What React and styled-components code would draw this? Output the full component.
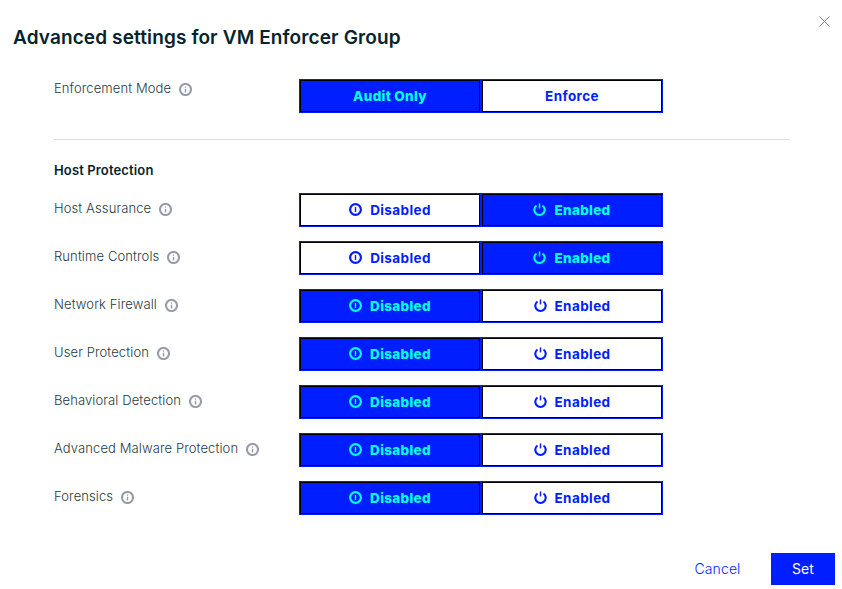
import React from "react";
import styled, { createGlobalStyle } from "styled-components";

const GlobalStyle = createGlobalStyle`
  *, *::before, *::after { box-sizing: border-box; }
  body { margin: 0; background: #fff; font-family: Inter, sans-serif; }
  button { font-family: inherit; margin: 0; cursor: pointer; }
`;

const Dialog = styled.main`
  position: relative;
  width: 842px;
  height: 589px;
  padding-top: 25px;
  background: #fff;
  color: #07242d;
  overflow: hidden;
`;

const Title = styled.h1`
  margin: 0 0 28px 13px;
  font-size: 19px;
  line-height: 26px;
  font-weight: 600;
  letter-spacing: 0.12px;
  white-space: nowrap;
`;

const CloseButton = styled.button`
  position: absolute;
  top: 16px;
  right: 12px;
  width: 11px;
  height: 11px;
  padding: 0;
  border: 0;
  background: none;
  color: #7c868d;
  svg { display: block; }
`;

const Settings = styled.section`
  width: 736px;
  margin-left: 54px;
`;

const Row = styled.div`
  display: grid;
  grid-template-columns: 245px 364px;
  height: 34px;
  margin-bottom: ${(p) => (p.$last ? 0 : 14)}px;
`;

const Label = styled.div`
  display: flex;
  align-items: center;
  align-self: start;
  gap: 8px;
  height: ${(p) => (p.$lowered ? 30 : 18)}px;
  font-size: 13px;
  font-weight: 300;
  letter-spacing: 0.11px;
  color: #1f3a42;
  white-space: nowrap;
  svg { flex: none; margin-top: 2px; }
`;

const Divider = styled.hr`
  height: 1px;
  margin: 26px 0 20px;
  border: 0;
  background: #d9dddd;
`;

const SectionTitle = styled.h2`
  margin: 0 0 13px;
  font-size: 13px;
  line-height: 20px;
  font-weight: 600;
  letter-spacing: 0.14px;
`;

const Toggle = styled.div`
  display: grid;
  grid-template-columns: 180px 180px;
  gap: 2px;
  height: 34px;
  padding: 1px;
  background: #001eff;
`;

const Option = styled.button`
  display: flex;
  align-items: center;
  justify-content: center;
  gap: 8px;
  padding: 0;
  border: 1px solid #000;
  background: ${(p) => (p.$active ? "#001eff" : "#fff")};
  color: ${(p) => (p.$active ? "#00ffe4" : "#001eff")};
  font-size: 13.5px;
  line-height: 20px;
  font-weight: ${(p) => (p.$active ? 800 : 700)};
  letter-spacing: ${(p) => (p.$active ? 0.3 : 0.4)}px;
  svg { flex: none; margin-bottom: 2px; }
`;

const Footer = styled.footer`
  display: flex;
  justify-content: flex-end;
  margin: 38px 7px 0 0;
`;

const FooterButton = styled.button`
  height: 32px;
  width: ${(p) => (p.$primary ? 64 : 107)}px;
  padding: 0 0 1px;
  border: 0;
  background: ${(p) => (p.$primary ? "#001eff" : "transparent")};
  color: ${(p) => (p.$primary ? "#fff" : "#001eff")};
  font-size: 14px;
  font-weight: ${(p) => (p.$primary ? 400 : 300)};
  letter-spacing: 0.1px;
`;

const InfoIcon = () => (
  <svg width="13" height="13" viewBox="0 0 13 13" fill="none">
    <circle cx="6.5" cy="6.5" r="5.5" stroke="#969ca7" strokeWidth="2.1" />
    <path d="M6.5 5.7v3.8M6.5 3.4v1.3" stroke="#969ca7" strokeWidth="1.4" />
  </svg>
);

const OffIcon = () => (
  <svg width="13" height="13" viewBox="0 0 13 13" fill="none" stroke="currentColor">
    <circle cx="6.5" cy="6.5" r="5.4" strokeWidth="2.2" />
    <path d="M6.5 4v5" strokeWidth="1.4" />
  </svg>
);

const PowerIcon = () => (
  <svg width="13" height="13" viewBox="0 0 13 13" fill="none" stroke="currentColor">
    <path d="M3.5 2.5A5.2 5.2 0 1 0 9.5 2.5" strokeWidth="2.1" />
    <path d="M6.5 0.4v5" strokeWidth="1.5" />
  </svg>
);

const features = [
  ["Host Assurance", true],
  ["Runtime Controls", true],
  ["Network Firewall", false],
  ["User Protection", false],
  ["Behavioral Detection", false],
  ["Advanced Malware Protection", false],
  ["Forensics", false],
];

const SettingLabel = ({ children, lowered }) => (
  <Label $lowered={lowered}>
    <span>{children}</span>
    <InfoIcon />
  </Label>
);

export default function App() {
  return (
    <>
      <GlobalStyle />
      <Dialog>
        <Title>Advanced settings for VM Enforcer Group</Title>
        <CloseButton aria-label="Close">
          <svg width="11" height="11" viewBox="0 0 11 11" stroke="currentColor" strokeWidth="1">
            <path d="M.5 .5l10 10M10.5 .5l-10 10" />
          </svg>
        </CloseButton>
        <Settings>
          <Row $last>
            <SettingLabel>Enforcement Mode</SettingLabel>
            <Toggle>
              <Option $active>Audit Only</Option>
              <Option>Enforce</Option>
            </Toggle>
          </Row>
          <Divider />
          <SectionTitle>Host Protection</SectionTitle>
          {features.map(([name, enabled], i) => (
            <Row key={name} $last={i === features.length - 1}>
              <SettingLabel lowered>{name}</SettingLabel>
              <Toggle>
                <Option $active={!enabled}><OffIcon />Disabled</Option>
                <Option $active={enabled}><PowerIcon />Enabled</Option>
              </Toggle>
            </Row>
          ))}
        </Settings>
        <Footer>
          <FooterButton>Cancel</FooterButton>
          <FooterButton $primary>Set</FooterButton>
        </Footer>
      </Dialog>
    </>
  );
}
